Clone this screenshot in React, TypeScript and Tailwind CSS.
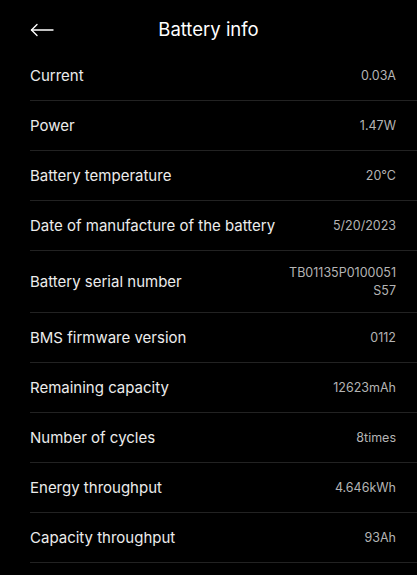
import type { ReactNode } from "react";

const ROWS: { label: string; value: ReactNode; tall?: boolean }[] = [
  { label: "Current", value: "0.03A" },
  { label: "Power", value: "1.47W" },
  { label: "Battery temperature", value: "20°C" },
  { label: "Date of manufacture of the battery", value: "5/20/2023" },
  {
    label: "Battery serial number",
    value: (
      <>
        TB01135P0100051
        <br />
        S57
      </>
    ),
    tall: true,
  },
  { label: "BMS firmware version", value: "0112" },
  { label: "Remaining capacity", value: "12623mAh" },
  { label: "Number of cycles", value: "8times" },
  { label: "Energy throughput", value: "4.646kWh" },
  { label: "Capacity throughput", value: "93Ah" },
];

function BackArrow(): ReactNode {
  return (
    <svg
      viewBox="0 0 24 16"
      className="h-[16px] w-[24px] fill-none stroke-white"
      strokeWidth={1.4}
      strokeLinecap="round"
      strokeLinejoin="round"
    >
      <path d="M23 8H1.5" />
      <path d="M7 2.5L1.5 8L7 13.5" />
    </svg>
  );
}

export default function App(): ReactNode {
  return (
    <div className="min-h-screen w-full overflow-hidden bg-black font-['Inter',sans-serif] antialiased">
      {/* Header */}
      <div className="relative flex h-[51px] items-center justify-center pt-[8px]">
        <div className="absolute left-[30px] top-[22px]">
          <BackArrow />
        </div>
        <h1 className="text-[18.5px] font-normal text-white">Battery info</h1>
      </div>

      {/* Rows */}
      <div className="pl-[30px]">
        {ROWS.map((row) => (
          <div
            key={row.label}
            className={`flex items-center justify-between border-b border-[#222] pr-[21px] pt-[1px] ${
              row.tall ? "h-[62px]" : "h-[50px]"
            }`}
          >
            <span className="text-[15px] text-[#ececec]">{row.label}</span>
            <span className="text-right text-[12.5px] leading-[18px] text-[#b4b4b4]">{row.value}</span>
          </div>
        ))}
      </div>
    </div>
  );
}
